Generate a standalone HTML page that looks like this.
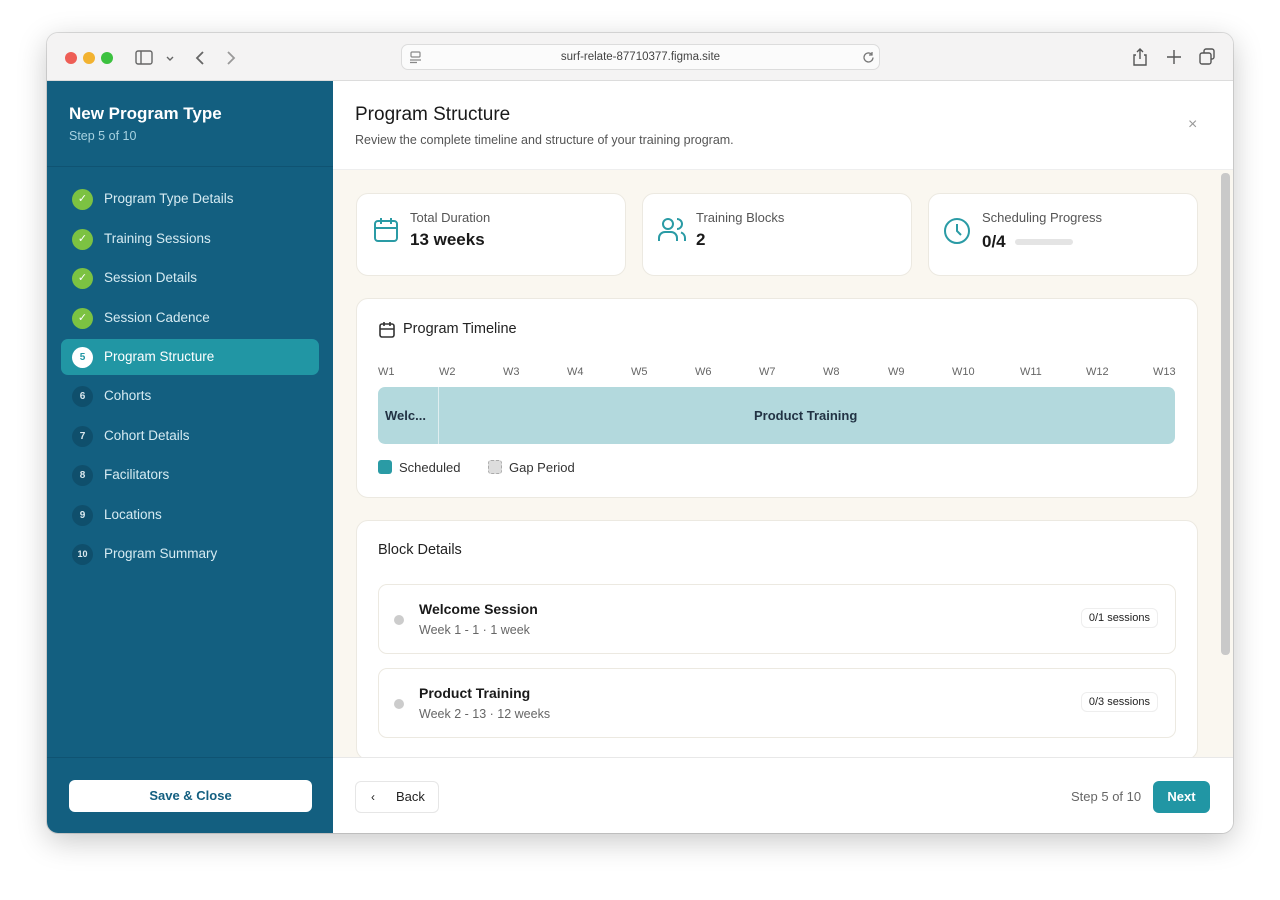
<!DOCTYPE html>
<html><head><meta charset="utf-8"><style>
*{box-sizing:border-box;margin:0;padding:0}
body{width:1280px;height:900px;background:#fff;font-family:"Liberation Sans",sans-serif;position:relative;overflow:hidden;color:#1a1a1a}
.a{position:absolute}
.win{left:47px;top:33px;width:1186px;height:800px;border-radius:11px;overflow:hidden;box-shadow:0 8px 30px rgba(0,0,0,.22),0 0 0 1px rgba(0,0,0,.12);background:#fff}
.tb{left:0;top:0;width:1186px;height:48px;background:#f4f3f3;border-bottom:1px solid #dcdcdc}
.side{left:0;top:48px;width:286px;height:752px;background:#135f80}
.nav{left:14px;width:258px;height:36px;border-radius:7px;font-size:13.5px;color:#d6ebf2;line-height:36px;padding-left:43px}
.ck{position:absolute;left:11px;top:8px;width:21px;height:21px;border-radius:50%;background:#7cc242;color:#fff;font-size:11px;text-align:center;line-height:21px}
.nm{position:absolute;left:11px;top:8px;width:21px;height:21px;border-radius:50%;background:#0f4f6c;color:#dbe9ef;font-size:10px;text-align:center;line-height:21px;font-weight:bold}
.card{background:#fff;border:1px solid #ece9e1;border-radius:12px}
.lbl{font-size:13px;color:#555}
.val{font-size:17px;color:#1a1a1a;font-weight:bold}
.wk{top:333px;font-size:11px;color:#666}
</style></head><body>
<div class="a win">
 <div class="a tb">
  <div class="a" style="left:18px;top:19px;width:12px;height:12px;border-radius:50%;background:#ee5e56"></div>
  <div class="a" style="left:36px;top:19px;width:12px;height:12px;border-radius:50%;background:#f2b230"></div>
  <div class="a" style="left:54px;top:19px;width:12px;height:12px;border-radius:50%;background:#3cc13f"></div>
  <svg class="a" style="left:88px;top:16px" width="80" height="18" viewBox="0 0 80 18" fill="none" stroke="#666" stroke-width="1.4"><rect x="1" y="2" width="16" height="13" rx="2"/><line x1="6" y1="2" x2="6" y2="15"/><path d="M32 8l3 3 3-3"/><path d="M68 3l-6 6 6 6" stroke-width="1.8"/></svg>
  <svg class="a" style="left:178px;top:16px" width="12" height="18" fill="none" stroke="#999" stroke-width="1.8"><path d="M3 3l6 6-6 6"/></svg>
  <div class="a" style="left:354px;top:11px;width:479px;height:26px;border-radius:7px;background:#fbfbfb;border:1px solid #dcdcdc;font-size:11.5px;color:#444;text-align:center;line-height:24px">surf-relate-87710377.figma.site</div>
  <svg class="a" style="left:362px;top:17px" width="14" height="14" fill="none" stroke="#888" stroke-width="1.2"><rect x="2" y="2" width="9" height="5" rx="1"/><line x1="1" y1="10" x2="12" y2="10"/><line x1="1" y1="12.5" x2="8" y2="12.5"/></svg>
  <svg class="a" style="left:815px;top:18px" width="13" height="13" fill="none" stroke="#777" stroke-width="1.3"><path d="M11 6.5a4.5 4.5 0 1 1-1.5-3.4M10 1v3H7"/></svg>
  <svg class="a" style="left:1085px;top:14px" width="90" height="20" fill="none" stroke="#555" stroke-width="1.4"><path d="M4 8H2v10h12V8h-2M8 12V2M5 5l3-3 3 3"/><path d="M42 3v14M35 10h14"/><rect x="68" y="6" width="11" height="11" rx="2"/><path d="M72 6V4a2 2 0 0 1 2-2h6a2 2 0 0 1 2 2v6a2 2 0 0 1-2 2h-1"/></svg>
 </div>
 <div class="a side">
  <div class="a" style="left:22px;top:23px;font-size:17px;font-weight:bold;color:#fff">New Program Type</div>
  <div class="a" style="left:22px;top:48px;font-size:12.5px;color:#a8d2e0">Step 5 of 10</div>
  <div class="a" style="left:0;top:85px;width:286px;height:1px;background:#0f5372"></div>
  <div class="a nav" style="top:100px"><span class="ck">✓</span>Program Type Details</div>
  <div class="a nav" style="top:140px"><span class="ck">✓</span>Training Sessions</div>
  <div class="a nav" style="top:179px"><span class="ck">✓</span>Session Details</div>
  <div class="a nav" style="top:219px"><span class="ck">✓</span>Session Cadence</div>
  <div class="a nav" style="top:258px;background:#2196a4;color:#fff"><span class="nm" style="background:#fff;color:#2196a4">5</span>Program Structure</div>
  <div class="a nav" style="top:297px"><span class="nm">6</span>Cohorts</div>
  <div class="a nav" style="top:337px"><span class="nm">7</span>Cohort Details</div>
  <div class="a nav" style="top:376px"><span class="nm">8</span>Facilitators</div>
  <div class="a nav" style="top:416px"><span class="nm">9</span>Locations</div>
  <div class="a nav" style="top:455px"><span class="nm" style="font-size:9px">10</span>Program Summary</div>
  <div class="a" style="left:0;top:676px;width:286px;height:1px;background:#0f5372"></div>
  <div class="a" style="left:22px;top:699px;width:243px;height:32px;background:#fff;border-radius:6px;text-align:center;line-height:32px;font-size:13px;color:#135f80;font-weight:bold">Save &amp; Close</div>
 </div>
 <!-- main -->
 <div class="a" style="left:286px;top:48px;width:900px;height:89px;background:#fff;border-bottom:1px solid #eee">
  <div class="a" style="left:22px;top:23px;font-size:19px;color:#1a1a1a">Program Structure</div>
  <div class="a" style="left:22px;top:52px;font-size:12.5px;color:#555">Review the complete timeline and structure of your training program.</div>
  <div class="a" style="left:855px;top:35px;font-size:16px;color:#999">×</div>
 </div>
 <div class="a" style="left:286px;top:137px;width:900px;height:587px;background:#faf7f0"></div>
 <div class="a" style="left:1174px;top:140px;width:9px;height:482px;border-radius:4px;background:#c9c9c9"></div>
 <!-- stat cards -->
 <div class="a card" style="left:309px;top:160px;width:270px;height:83px">
  <svg class="a" style="left:15px;top:22px" width="28" height="28" fill="none" stroke="#2a9ba5" stroke-width="2"><rect x="3" y="5" width="22" height="20" rx="3"/><path d="M3 12h22M9 2v6M19 2v6"/></svg>
  <div class="a lbl" style="left:53px;top:16px">Total Duration</div><div class="a val" style="left:53px;top:36px">13 weeks</div>
 </div>
 <div class="a card" style="left:595px;top:160px;width:270px;height:83px">
  <svg class="a" style="left:14px;top:22px" width="30" height="28" fill="none" stroke="#2a9ba5" stroke-width="2"><circle cx="11" cy="8" r="5"/><path d="M2 25v-3a6 6 0 0 1 6-6h6a6 6 0 0 1 6 6v3M20 3a5 5 0 0 1 0 10M28 25v-3a6 6 0 0 0-4-5.6"/></svg>
  <div class="a lbl" style="left:53px;top:16px">Training Blocks</div><div class="a val" style="left:53px;top:36px">2</div>
 </div>
 <div class="a card" style="left:881px;top:160px;width:270px;height:83px">
  <svg class="a" style="left:13px;top:22px" width="30" height="30" fill="none" stroke="#2a9ba5" stroke-width="2"><circle cx="15" cy="15" r="12"/><path d="M15 8v7l4 4"/></svg>
  <div class="a lbl" style="left:53px;top:16px">Scheduling Progress</div><div class="a val" style="left:53px;top:38px">0/4</div>
  <div class="a" style="left:86px;top:45px;width:58px;height:6px;border-radius:3px;background:#e4e4e4"></div>
 </div>
 <!-- timeline -->
 <div class="a card" style="left:309px;top:265px;width:842px;height:200px">
  <svg class="a" style="left:21px;top:22px" width="18" height="18" fill="none" stroke="#333" stroke-width="1.6"><rect x="2" y="3" width="14" height="13" rx="2"/><path d="M2 8h14M6 1v4M12 1v4"/></svg>
  <div class="a" style="left:46px;top:22px;font-size:14.5px;color:#222">Program Timeline</div>
 </div>
 <div class="a" style="left:331px;top:354px;width:797px;height:57px;border-radius:7px;background:#b3d9dd"></div>
 <div class="a" style="left:391px;top:354px;width:1px;height:57px;background:#e0eef0"></div>
 <div class="a" style="left:338px;top:375px;font-size:13px;font-weight:bold;color:#234">Welc...</div>
 <div class="a" style="left:707px;top:375px;font-size:13px;font-weight:bold;color:#234">Product Training</div>
 <div class="a wk" style="left:331px">W1</div><div class="a wk" style="left:392px">W2</div><div class="a wk" style="left:456px">W3</div><div class="a wk" style="left:520px">W4</div><div class="a wk" style="left:584px">W5</div><div class="a wk" style="left:648px">W6</div><div class="a wk" style="left:712px">W7</div><div class="a wk" style="left:776px">W8</div><div class="a wk" style="left:841px">W9</div><div class="a wk" style="left:905px">W10</div><div class="a wk" style="left:973px">W11</div><div class="a wk" style="left:1039px">W12</div><div class="a wk" style="left:1106px">W13</div>
 <div class="a" style="left:331px;top:427px;width:14px;height:14px;border-radius:3px;background:#2a9ba5"></div>
 <div class="a" style="left:352px;top:427px;font-size:13px;color:#333">Scheduled</div>
 <div class="a" style="left:441px;top:427px;width:14px;height:14px;border-radius:3px;background:#ddd;border:1px dashed #aaa"></div>
 <div class="a" style="left:462px;top:427px;font-size:13px;color:#333">Gap Period</div>
 <!-- block details -->
 <div class="a card" style="left:309px;top:487px;width:842px;height:240px">
  <div class="a" style="left:21px;top:21px;font-size:14.5px;color:#222">Block Details</div>
  <div class="a card" style="left:21px;top:63px;width:798px;height:70px;border-radius:9px">
   <div class="a" style="left:15px;top:30px;width:10px;height:10px;border-radius:50%;background:#ccc"></div>
   <div class="a" style="left:40px;top:16px;font-size:14px;font-weight:bold;color:#1a1a1a">Welcome Session</div>
   <div class="a" style="left:40px;top:38px;font-size:12.5px;color:#666">Week 1 - 1 · 1 week</div>
   <div class="a" style="right:17px;top:23px;height:20px;padding:0 7px;border:1px solid #eee;border-radius:6px;font-size:11px;line-height:18px;color:#222">0/1 sessions</div>
  </div>
  <div class="a card" style="left:21px;top:147px;width:798px;height:70px;border-radius:9px">
   <div class="a" style="left:15px;top:30px;width:10px;height:10px;border-radius:50%;background:#ccc"></div>
   <div class="a" style="left:40px;top:16px;font-size:14px;font-weight:bold;color:#1a1a1a">Product Training</div>
   <div class="a" style="left:40px;top:38px;font-size:12.5px;color:#666">Week 2 - 13 · 12 weeks</div>
   <div class="a" style="right:17px;top:23px;height:20px;padding:0 7px;border:1px solid #eee;border-radius:6px;font-size:11px;line-height:18px;color:#222">0/3 sessions</div>
  </div>
 </div>
 <!-- footer -->
 <div class="a" style="left:286px;top:724px;width:900px;height:76px;background:#fff;border-top:1px solid #e8e8e8">
  <div class="a" style="left:22px;top:23px;width:84px;height:32px;border:1px solid #e6e6e6;border-radius:6px;font-size:13px;line-height:30px;color:#222"><span style="position:absolute;left:15px;font-size:12px">‹</span><span style="position:absolute;left:40px">Back</span></div>
  <div class="a" style="left:738px;top:31px;font-size:13px;color:#666">Step 5 of 10</div>
  <div class="a" style="left:820px;top:23px;width:57px;height:32px;border-radius:6px;background:#2196a4;color:#fff;font-size:13px;font-weight:bold;text-align:center;line-height:32px">Next</div>
 </div>
</div>
</body></html>
